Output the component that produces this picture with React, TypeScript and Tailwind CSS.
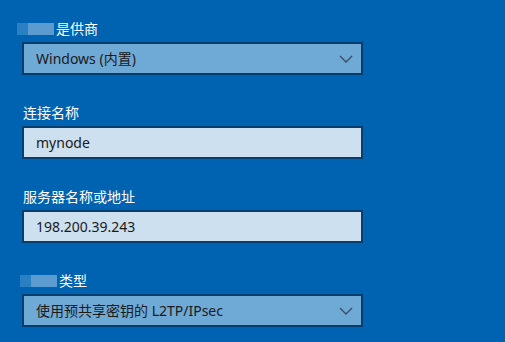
const FONT = { fontFamily: '"Noto Sans", "Noto Sans CJK SC", sans-serif' };

function Blur() {
  // masked word before the label
  return (
    <span className="inline-flex h-[12px] mr-[2px]">
      <span className="w-[11px] bg-[#2a80c2]" />
      <span className="w-[26px] bg-[#5c9bd0]" />
    </span>
  );
}

function Label({ text, masked }: { text: string; masked?: boolean }) {
  return (
    <div className="h-[20px] mb-[3px] flex items-center text-[14px] leading-[20px] text-white">
      {masked && <Blur />}
      <span className={masked ? '' : 'ml-[1px]'}>{text}</span>
    </div>
  );
}

function Chevron() {
  return (
    <svg width="14" height="8" viewBox="0 0 14 8" className="text-[#3b4d5e]">
      <polyline points="1,1 7,7 13,1" fill="none" stroke="currentColor" strokeWidth="1.3" />
    </svg>
  );
}

function Select({ value }: { value: string }) {
  return (
    <div className="w-[341px] h-[33px] border-2 border-[#073e6e] bg-[#6fa9d6] flex items-center justify-between pl-[12px] pr-[8px] text-[14px] text-[#1a1a1a]">
      <span>{value}</span>
      <Chevron />
    </div>
  );
}

function Input({ value }: { value: string }) {
  return (
    <div className="w-[341px] h-[33px] border-2 border-[#073e6e] bg-[#cde0ef] flex items-center pl-[12px] text-[14px] text-[#1a1a1a]">
      {value}
    </div>
  );
}

export default function App() {
  return (
    <div className="w-[505px] h-[342px] overflow-hidden bg-[#0063b1] pt-[19px] pl-[22px]" style={FONT}>
      <div className="ml-[-5px]">
        <Label text="是供商" masked />
      </div>
      <Select value="Windows (内置)" />

      <div className="mt-[28px]">
        <Label text="连接名称" />
      </div>
      <Input value="mynode" />

      <div className="mt-[28px]">
        <Label text="服务器名称或地址" />
      </div>
      <Input value="198.200.39.243" />

      <div className="mt-[28px] ml-[-2px]">
        <Label text="类型" masked />
      </div>
      <Select value="使用预共享密钥的 L2TP/IPsec" />
    </div>
  );
}
